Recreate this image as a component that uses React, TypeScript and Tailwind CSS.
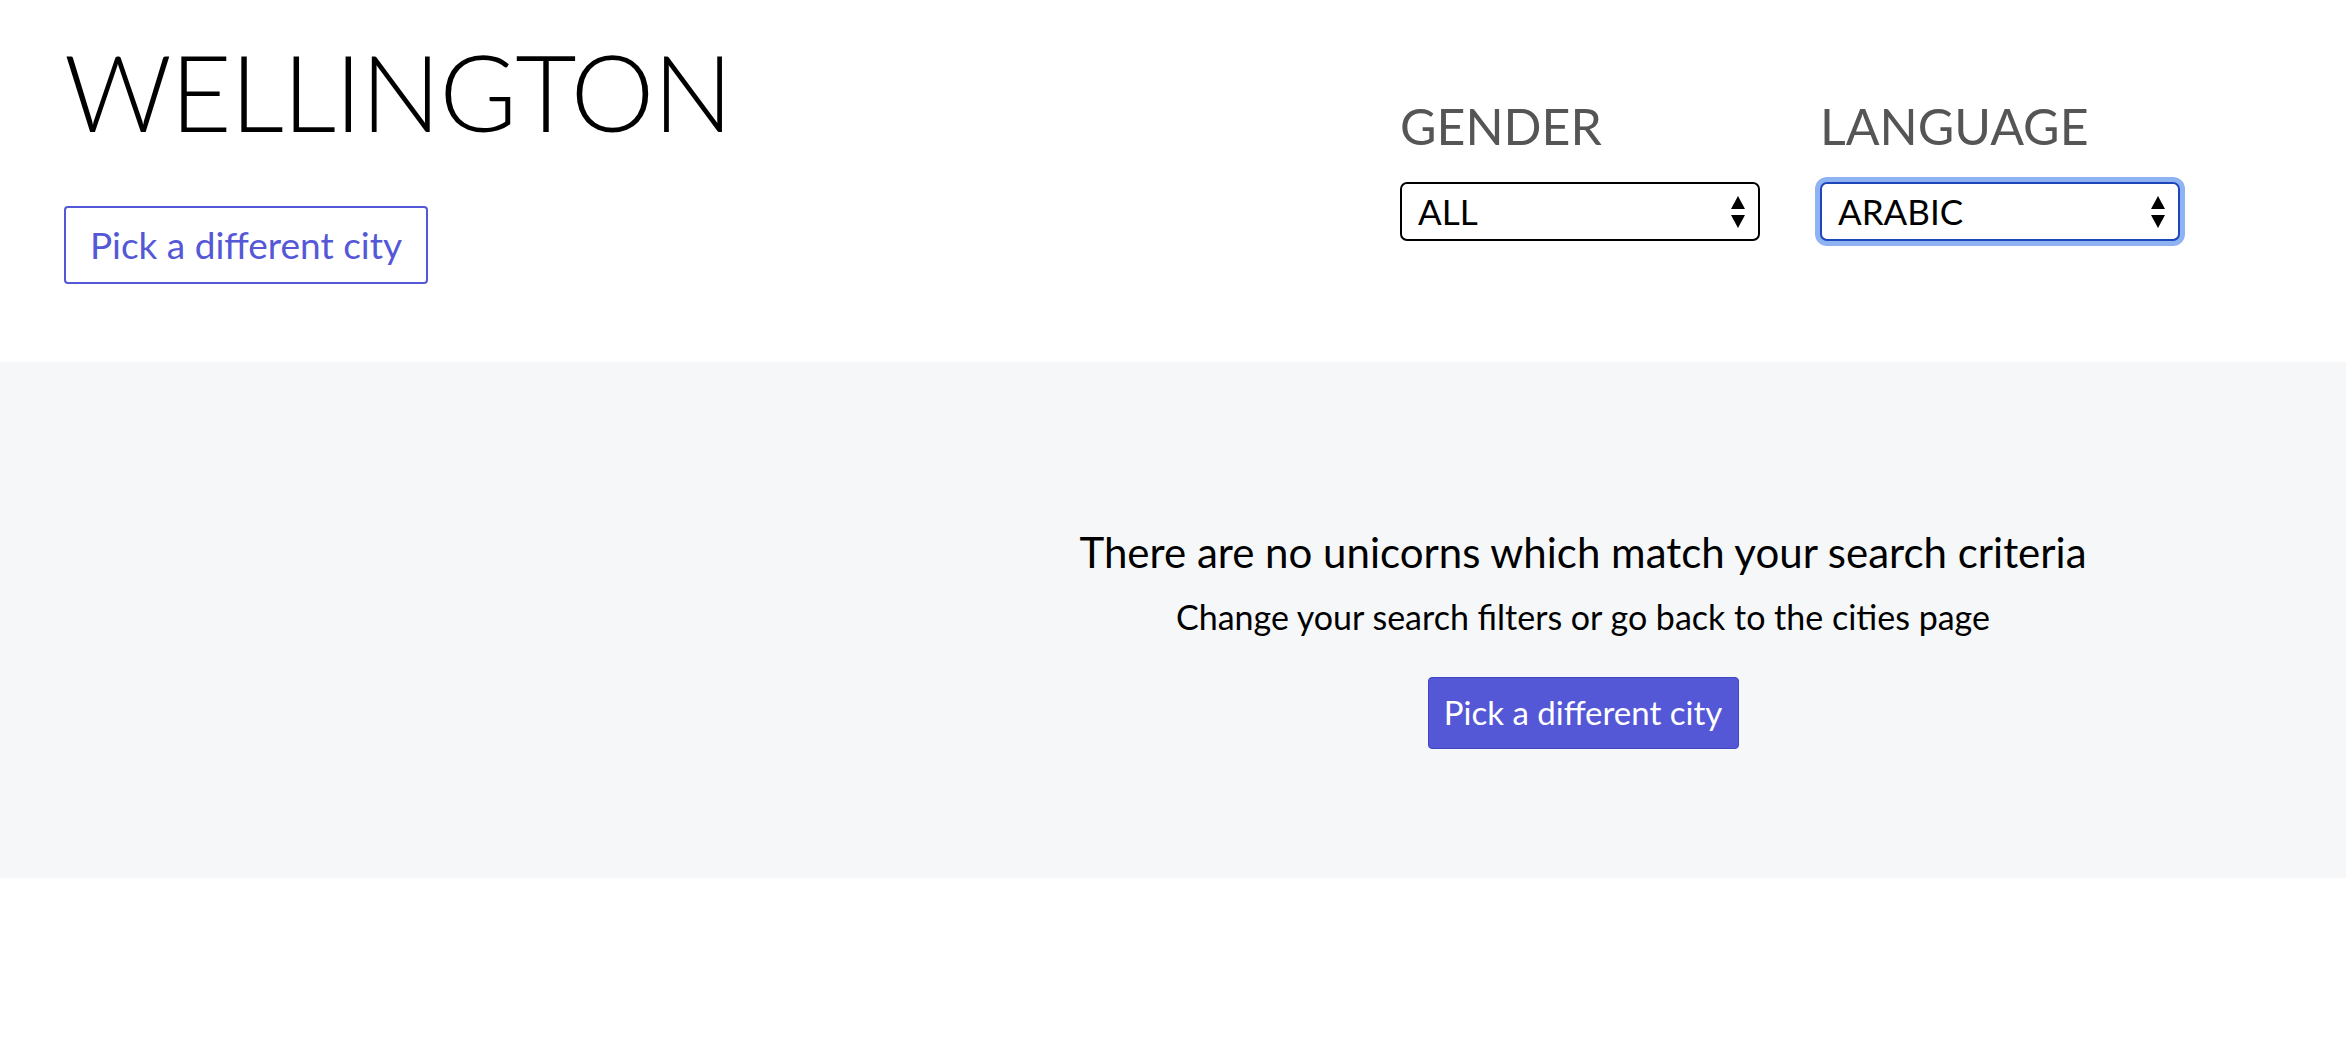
import { ReactNode } from "react";

const font = { fontFamily: "Lato, 'Open Sans', sans-serif" };

function Arrows() {
  return (
    <svg width="16" height="34" viewBox="0 0 16 34" className="shrink-0">
      <path d="M8 1 L15 14 L1 14 Z" fill="#000" />
      <path d="M1 20 L15 20 L8 33 Z" fill="#000" />
    </svg>
  );
}

function Filter({ label, value, focused, children }: { label: string; value: string; focused?: boolean; children?: ReactNode }) {
  return (
    <div className="flex flex-col w-[420px]">
      <label className="text-[50px] font-normal text-[#555] leading-none mt-[101px]">{label}</label>
      <div
        className={
          focused
            ? "mt-[31px] w-[360px] h-[59px] flex items-center justify-between pl-[16px] pr-[12px] bg-white rounded-[7px] border-2 border-[#1d47b8] ring-[5px] ring-[#8fb2f3]"
            : "mt-[31px] w-[360px] h-[59px] flex items-center justify-between pl-[16px] pr-[12px] bg-white rounded-[7px] border-2 border-black"
        }
      >
        <span className="text-[35px] text-black leading-none">{value}</span>
        <Arrows />
        {children}
      </div>
    </div>
  );
}

export default function App() {
  return (
    <div className="min-h-screen bg-white" style={font}>
      <div className="flex justify-between h-[362px] pl-[64px] pr-[106px]">
        <div className="flex flex-col items-start">
          <h1 className="text-[106px] font-light text-black leading-none mt-[38px] tracking-[-1.5px]">WELLINGTON</h1>
          <button className="mt-[62px] w-[364px] h-[78px] border-2 border-[#5558d6] rounded-[4px] text-[#5558d6] text-[37px] bg-white">
            Pick a different city
          </button>
        </div>
        <div className="flex">
          <Filter label="GENDER" value="ALL" />
          <Filter label="LANGUAGE" value="ARABIC" focused />
        </div>
      </div>

      <div className="bg-[#f6f7f9] h-[516px] pl-[820px] flex flex-col items-center">
        <h2 className="mt-[160px] text-[42px] text-black leading-[60px]">There are no unicorns which match your search criteria</h2>
        <p className="mt-[10px] text-[34px] text-black leading-[50px]">Change your search filters or go back to the cities page</p>
        <button className="mt-[35px] w-[311px] h-[72px] bg-[#5558d6] border border-[#4346c4] rounded-[4px] text-white text-[33px]">
          Pick a different city
        </button>
      </div>
    </div>
  );
}
